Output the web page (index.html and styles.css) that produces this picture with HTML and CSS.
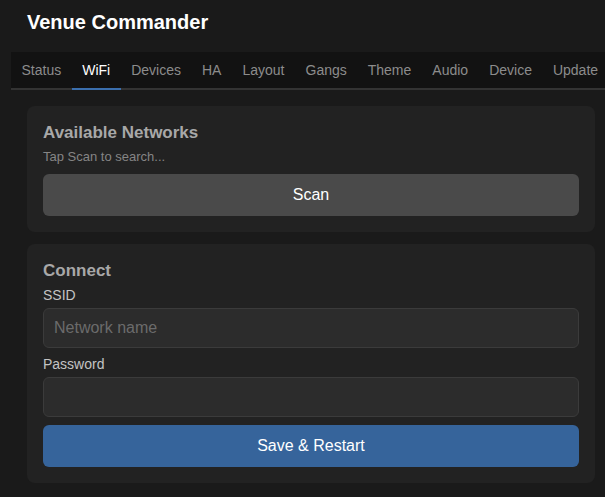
FILE: index.html
```html
<!DOCTYPE html>
<html lang="en">
<head>
    <meta charset="UTF-8">
    <meta name="viewport" content="width=device-width, initial-scale=1.0">
    <title>Venue Commander</title>
    <link rel="stylesheet" href="styles.css">
</head>
<body>
    <div id="app">
        <h1 class="title">Venue Commander</h1>

        <nav class="tabs">
            <a class="tab">Status</a>
            <a class="tab active">WiFi</a>
            <a class="tab">Devices</a>
            <a class="tab">HA</a>
            <a class="tab">Layout</a>
            <a class="tab">Gangs</a>
            <a class="tab">Theme</a>
            <a class="tab">Audio</a>
            <a class="tab">Device</a>
            <a class="tab">Update</a>
        </nav>

        <section class="card">
            <h2 class="card-title">Available Networks</h2>
            <p class="hint">Tap Scan to search...</p>
            <button class="btn">Scan</button>
        </section>

        <section class="card">
            <h2 class="card-title">Connect</h2>
            <form id="wifiForm">
                <label for="ssid">SSID</label>
                <input type="text" id="ssid" placeholder="Network name"/>
                <label for="pass">Password</label>
                <input type="password" id="pass"/>
                <button type="submit" class="btn btn-primary">Save &amp; Restart</button>
            </form>
        </section>
    </div>
</body>
</html>
```

FILE: styles.css
```css
html, body {
    margin: 0;
    overflow: hidden;
}
body {
    background: #1a1a1a;
    color: #ddd;
    font-family: "Liberation Sans", Arial, sans-serif;
}
#app {
    width: 600px;
    margin-left: 11px;
}
.title {
    margin: 0;
    padding: 11px 16px 0;
    height: 41px;
    font-size: 20px;
    line-height: 23px;
    color: #fff;
}
.tabs {
    display: flex;
    margin-bottom: 16px;
    background: #121212;
    box-shadow: inset 0 -2px 0 #333;
    white-space: nowrap;
    overflow: hidden;
}
.tab {
    padding: 10px 10.5px;
    font-size: 14px;
    line-height: 16px;
    color: #8c8c8c;
    border-bottom: 2px solid transparent;
}
.tab.active {
    color: #fff;
    border-bottom-color: #3b6fae;
}
.card {
    background: #222;
    border-radius: 8px;
    margin: 0 16px 12px;
    padding: 16px;
}
.card-title {
    margin: 0 0 6px;
    font-size: 17px;
    line-height: 21px;
    color: #a8a8a8;
}
.hint {
    margin: 0 0 10px;
    font-size: 13px;
    line-height: 15px;
    color: #858585;
}
#wifiForm label {
    display: block;
    font-size: 14px;
    line-height: 16px;
    color: #c4c4c4;
    margin-bottom: 5px;
}
#wifiForm input {
    display: block;
    box-sizing: border-box;
    width: 100%;
    height: 40px;
    margin: 0 0 8px;
    padding: 0 10px;
    background: #2c2c2c;
    border: 1px solid #3b3b3b;
    border-radius: 6px;
    color: #ddd;
    font-family: inherit;
    font-size: 16px;
}
#wifiForm input::placeholder {
    color: #6b6b6b;
}
.btn {
    display: block;
    width: 100%;
    padding: 12px;
    border: none;
    border-radius: 6px;
    background: #4a4a4a;
    color: #fff;
    font-family: inherit;
    font-size: 16px;
    line-height: 18px;
}
.btn-primary {
    background: #36649b;
}
```
